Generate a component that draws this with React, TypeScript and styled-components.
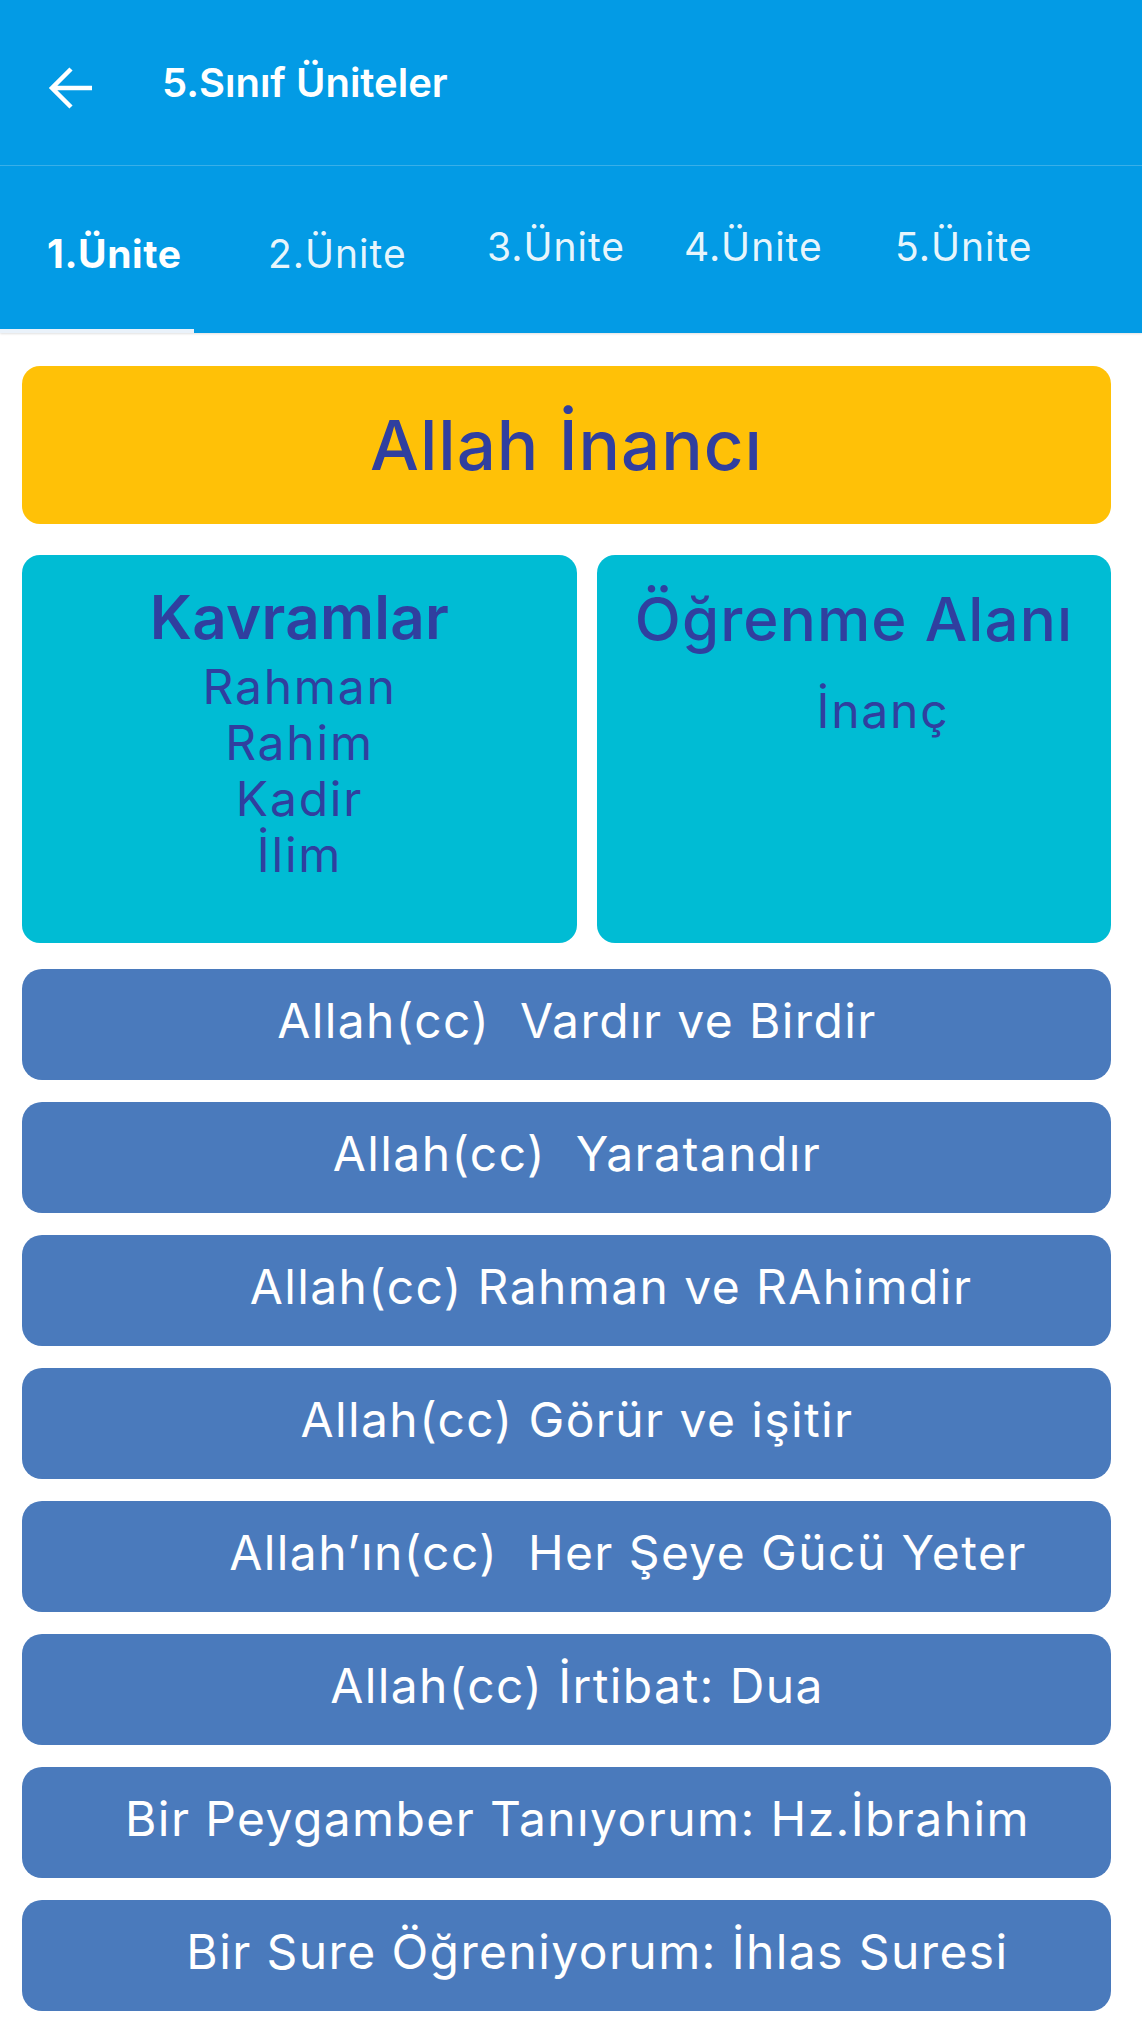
import React from "react";
import styled, { createGlobalStyle } from "styled-components";

const GlobalStyle = createGlobalStyle`
  html, body {
    margin: 0;
    padding: 0;
    background: #ffffff;
  }
  body {
    font-family: Inter, "Noto Sans", "Liberation Sans", sans-serif;
  }
  * { box-sizing: border-box; }
`;

const Page = styled.div`
  width: 1142px;
  min-height: 2031px;
  background: #ffffff;
`;

const AppBar = styled.header`
  height: 166px;
  background: #039be5;
  display: flex;
  align-items: center;
  padding-left: 47px;
  gap: 69px;
  border-bottom: 1px solid rgba(255, 255, 255, 0.22);
`;

const BackIcon = styled.svg`
  width: 46px;
  height: 44px;
  flex: none;
  margin-top: 10px;
`;

const Title = styled.h1`
  margin: 0;
  color: #ffffff;
  font-family: Inter, sans-serif;
  font-size: 40px;
  line-height: 48px;
  font-weight: 600;
`;

const TabBar = styled.nav`
  position: relative;
  height: 167px;
  background: #039be5;
  display: flex;
  align-items: flex-start;
  padding-left: 47px;
  box-shadow: 0 1px 2px rgba(0, 0, 0, 0.12);
`;

const Tab = styled.div<{ $w?: number; $active?: boolean; $lift?: boolean }>`
  flex: none;
  width: ${(p) => (p.$w ? `${p.$w}px` : "auto")};
  padding-top: ${(p) => (p.$lift ? 57 : 64)}px;
  font-family: Inter, sans-serif;
  font-size: 39px;
  line-height: 48px;
  letter-spacing: ${(p) => (p.$active ? 0.6 : 1)}px;
  font-weight: ${(p) => (p.$active ? 700 : 400)};
  color: ${(p) => (p.$active ? "#ffffff" : "rgba(255,255,255,0.93)")};
  white-space: nowrap;
`;

const Indicator = styled.span`
  position: absolute;
  left: 0;
  bottom: 0;
  width: 194px;
  height: 4px;
  background: #eaf2fa;
`;

const Content = styled.main`
  padding: 33px 31px 20px 22px;
  display: flex;
  flex-direction: column;
`;

const UnitCard = styled.div`
  height: 158px;
  background: #ffc107;
  border-radius: 18px;
  display: flex;
  align-items: center;
  justify-content: center;
  color: #303f9f;
  font-size: 69px;
  letter-spacing: 1px;
  font-weight: 500;
  margin-bottom: 31px;
`;

const InfoRow = styled.div`
  display: grid;
  grid-template-columns: 555px 514px;
  gap: 20px;
  height: 388px;
  margin-bottom: 26px;
`;

const InfoCard = styled.section<{ $top: number }>`
  background: #00bcd4;
  border-radius: 18px;
  display: flex;
  flex-direction: column;
  align-items: center;
  padding-top: ${(p) => p.$top}px;
  color: #303f9f;
`;

const InfoTitle = styled.h2<{ $weight: number }>`
  margin: 0;
  font-size: 60px;
  line-height: 72px;
  letter-spacing: ${(p) => (p.$weight > 500 ? 0.3 : 1.1)}px;
  font-weight: ${(p) => p.$weight};
`;

const InfoList = styled.div<{ $gap: number; $shift?: number }>`
  margin-top: ${(p) => p.$gap}px;
  padding-left: ${(p) => p.$shift ?? 0}px;
  display: flex;
  flex-direction: column;
  align-items: center;
`;

const InfoItem = styled.span`
  font-size: 48px;
  line-height: 56px;
  letter-spacing: 1.8px;
  font-weight: 400;
`;

const LessonList = styled.div`
  display: flex;
  flex-direction: column;
  gap: 22px;
`;

const LessonButton = styled.button<{ $shift: number }>`
  height: 111px;
  width: 100%;
  border: none;
  border-radius: 20px;
  background: #4a7abc;
  color: #ffffff;
  font-family: Inter, sans-serif;
  font-size: 48px;
  letter-spacing: 1.4px;
  font-weight: 400;
  display: flex;
  align-items: center;
  justify-content: center;
  padding: 0 0 8px ${(p) => p.$shift}px;
  white-space: pre;
  cursor: pointer;
`;

const tabs = [
  { label: "1.Ünite", w: 221, active: true },
  { label: "2.Ünite", w: 219 },
  { label: "3.Ünite", w: 197, lift: true },
  { label: "4.Ünite", w: 211, lift: true },
  { label: "5.Ünite", lift: true },
];

const lessons = [
  { text: "Allah(cc)  Vardır ve Birdir", shift: 21 },
  { text: "Allah(cc)  Yaratandır", shift: 21 },
  { text: "Allah(cc) Rahman ve RAhimdir", shift: 89 },
  { text: "Allah(cc) Görür ve işitir", shift: 21 },
  { text: "Allah’ın(cc)  Her Şeye Gücü Yeter", shift: 123 },
  { text: "Allah(cc) İrtibat: Dua", shift: 21 },
  { text: "Bir Peygamber Tanıyorum: Hz.İbrahim", shift: 22 },
  { text: "Bir Sure Öğreniyorum: İhlas Suresi", shift: 62 },
];

export default function App() {
  return (
    <Page>
      <GlobalStyle />
      <AppBar>
        <BackIcon viewBox="0 0 46 44" aria-label="Geri">
          <path
            d="M45 22H4 M24 3L5 22l19 19"
            fill="none"
            stroke="#ffffff"
            strokeWidth={4.5}
            strokeLinecap="butt"
            strokeLinejoin="miter"
          />
        </BackIcon>
        <Title>5.Sınıf Üniteler</Title>
      </AppBar>
      <TabBar>
        {tabs.map((t) => (
          <Tab key={t.label} $w={t.w} $active={t.active} $lift={t.lift}>
            {t.label}
          </Tab>
        ))}
        <Indicator />
      </TabBar>
      <Content>
        <UnitCard>Allah İnancı</UnitCard>
        <InfoRow>
          <InfoCard $top={26}>
            <InfoTitle $weight={600}>Kavramlar</InfoTitle>
            <InfoList $gap={6}>
              <InfoItem>Rahman</InfoItem>
              <InfoItem>Rahim</InfoItem>
              <InfoItem>Kadir</InfoItem>
              <InfoItem>İlim</InfoItem>
            </InfoList>
          </InfoCard>
          <InfoCard $top={28}>
            <InfoTitle $weight={500}>Öğrenme Alanı</InfoTitle>
            <InfoList $gap={28} $shift={58}>
              <InfoItem>İnanç</InfoItem>
            </InfoList>
          </InfoCard>
        </InfoRow>
        <LessonList>
          {lessons.map((l) => (
            <LessonButton key={l.text} $shift={l.shift}>
              {l.text}
            </LessonButton>
          ))}
        </LessonList>
      </Content>
    </Page>
  );
}
